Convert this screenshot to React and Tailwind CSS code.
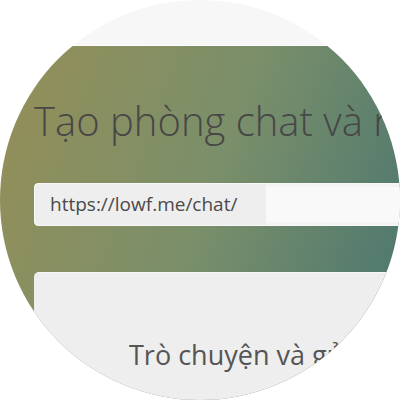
import React from 'react'

const font = { fontFamily: '"Open Sans", "Noto Sans", sans-serif' }

export default function App() {
  return (
    <div className="w-[400px] h-[400px] bg-white" style={font}>
      <div className="w-[400px] h-[400px] rounded-full overflow-hidden flex flex-col">
        {/* top nav strip */}
        <div className="h-[46px] shrink-0 bg-[#f7f7f7] border-b border-[#fdfdfd]" />

        {/* hero */}
        <div className="flex-1 bg-linear-110 from-[#958f57] via-[#7a8f6a] to-[#45746f] pl-[34px] pt-[47px] overflow-hidden">
          <h1 className="text-[40px] leading-[56px] font-light text-[#474747] whitespace-nowrap">
            Tạo phòng chat và riêng tư
          </h1>

          <div className="mt-[34px] h-[43px] flex rounded-l-[4px] bg-[#f4f4f4] border border-[#f8f8f8] w-[400px]">
            <span className="w-[231px] shrink-0 flex items-center pl-[15px] text-[19px] text-[#4a4a4a] bg-[#eeeeee] rounded-l-[4px] whitespace-nowrap">
              https://lowf.me/chat/
            </span>
            <div className="flex-1 my-[3px] bg-[#f9f9f9]" />
          </div>

          <div className="mt-[46px] w-[420px] h-[200px] rounded-tl-[5px] bg-[#eeeeee] border-t border-[#f6f6f6] pt-[63px] pl-[95px]">
            <p className="text-[27px] leading-[38px] text-[#555555] whitespace-nowrap">
              Trò chuyện và gửi tin nhắn
            </p>
          </div>
        </div>
      </div>
    </div>
  )
}
